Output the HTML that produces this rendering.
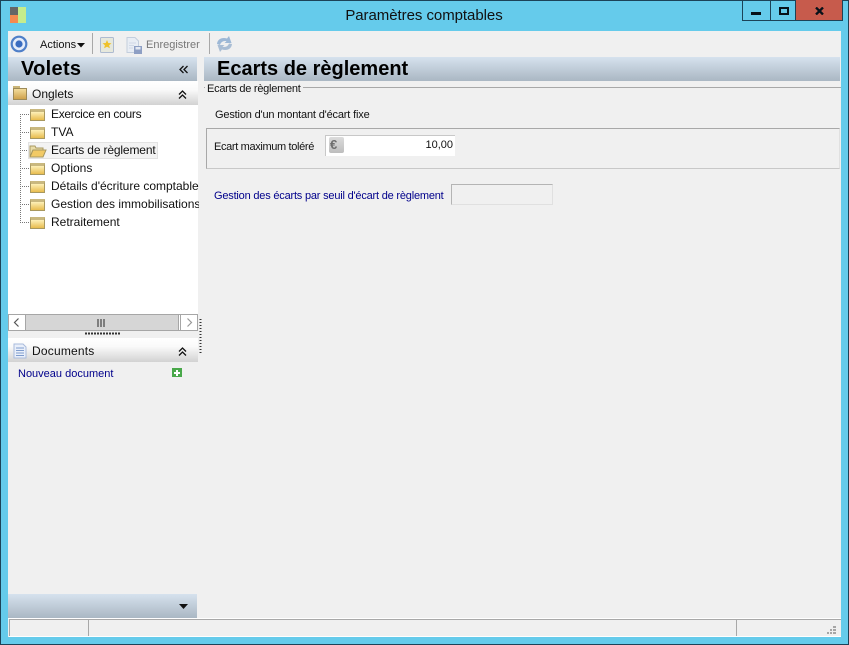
<!DOCTYPE html>
<html><head><meta charset="utf-8"><style>
html,body{margin:0;padding:0;background:#f0f0f0}
#w{position:relative;width:849px;height:645px;overflow:hidden;background:#65cbeb;font-family:"Liberation Sans",sans-serif;font-size:12px;color:#111}
#w div,#w svg{position:absolute}
.t{white-space:nowrap;line-height:14px}
.s{font-size:11px}
.grad{background:linear-gradient(#d6e2ee,#aab7c3)}
.hd{background:linear-gradient(#fff,#fafafa 35%,#d2d2d2)}
.f{left:30px;width:13px;height:8px;background:linear-gradient(#fdf0b8,#e8bc4e);border:1px solid #a89860;border-top:3px solid #c9b87f}
</style></head><body><div id="w">
<div style="left:0;top:0;width:847px;height:643px;border:1px solid #1c4358"></div>
<div style="left:8px;top:31px;width:833px;height:606px;background:#f0f0f0"></div>
<div style="left:10px;top:7px;width:8px;height:8px;background:#666"></div>
<div style="left:10px;top:15px;width:8px;height:8px;background:#f58a4f"></div>
<div style="left:18px;top:7px;width:8px;height:16px;background:#c5ec8c"></div>
<div class="t" style="left:0;top:8px;width:848px;text-align:center;font-size:15px;line-height:16px;color:#111;letter-spacing:-.05px">Paramètres comptables</div>
<div style="left:742px;top:0;width:27px;height:20px;border:1px solid #1c4358;border-top:0"></div>
<div style="left:770px;top:0;width:25px;height:20px;border-right:1px solid #1c4358;border-bottom:1px solid #1c4358"></div>
<div style="left:796px;top:0;width:46px;height:20px;background:#c75b4c;border:1px solid #1c4358;border-left:0;border-top:0"></div>
<div style="left:751px;top:12px;width:10px;height:3px;background:#08121a"></div>
<div style="left:779px;top:7px;width:6px;height:4px;border:2px solid #08121a"></div>
<svg style="left:815px;top:7px" width="9" height="8" viewBox="0 0 9 8"><path d="M1 0.500L8 7.500M8 0.500L1 7.500" stroke="#08121a" stroke-width="2.300" fill="none"/></svg>

<svg style="left:10px;top:35px" width="18" height="18" viewBox="0 0 18 18"><circle cx="9" cy="9" r="7.300" fill="#e4ecfa" stroke="#4f7fc8" stroke-width="2.200"/><circle cx="9" cy="9" r="3.600" fill="#3a6cc0"/></svg>
<div class="t s" style="left:40px;top:38px">Actions</div>
<svg style="left:77px;top:43px" width="8" height="5"><path d="M0 0H8L4 4.500Z" fill="#111"/></svg>
<div style="left:92px;top:33px;width:1px;height:21px;background:#a8a8a8"></div>
<svg style="left:100px;top:37px" width="14" height="16" viewBox="0 0 14 16"><rect x=".5" y=".5" width="13" height="15" rx="1" fill="#e6e8dc" stroke="#aebbd0"/><path d="M7 3l1.300 3 3.200.2-2.400 2 .8 3.100L7 9.700 4.100 11.300l.8-3.100-2.400-2 3.200-.2Z" fill="#efc22a"/></svg>
<svg style="left:126px;top:37px" width="17" height="17" viewBox="0 0 17 17"><path d="M1 .5H9L12.500 4V15.500H1Z" fill="#e8edf4" stroke="#c3cedd"/><path d="M3 6H10M3 8.500H8M3 11H7" stroke="#cfd8e6"/><rect x="8" y="9" width="8" height="8" fill="#8e9fc4"/><rect x="9.500" y="10" width="5" height="2.500" fill="#e3e8f2"/></svg>
<div class="t s" style="left:146px;top:38px;color:#777">Enregistrer</div>
<div style="left:209px;top:33px;width:1px;height:21px;background:#a8a8a8"></div>
<svg style="left:216px;top:35px" width="17" height="18" viewBox="0 0 17 18"><path d="M1 9C1.500 4 6 2 11 3.500L13 1 15.500 8H8.500L10.500 6.200C7.500 5.500 5 6.800 4 10Z" fill="#9db8d6"/><path d="M16 9C15.500 14 11 16 6 14.500L4 17 1.500 10H8.500L6.500 11.800C9.500 12.500 12 11.200 13 8.500Z" fill="#a9bdd4"/></svg>

<div class="grad" style="left:8px;top:57px;width:189px;height:24px"></div>
<div class="t" style="left:21px;top:59px;font-size:20px;line-height:21px;font-weight:bold;color:#000;letter-spacing:.3px">Volets</div>
<svg style="left:179px;top:65px" width="10" height="9" viewBox="0 0 10 9"><path d="M4.500 1L1 4.500 4.500 8M8.500 1L5 4.500 8.500 8" fill="none" stroke="#111" stroke-width="1.300"/></svg>

<div style="left:8px;top:81px;width:190px;height:24px" class="hd"></div>
<div style="left:13px;top:88px;width:12px;height:10px;background:linear-gradient(#f2dc9c,#cfa24c);border:1px solid #9d8a58"></div>
<div style="left:13px;top:86px;width:7px;height:2px;background:#c9b477"></div>
<div class="t" style="left:32px;top:87px">Onglets</div>
<svg style="left:178px;top:90px" width="9" height="9" viewBox="0 0 9 9"><path d="M1 4.500L4.500 1 8 4.500M1 8.500L4.500 5 8 8.500" fill="none" stroke="#111" stroke-width="1.300"/></svg>

<div style="left:8px;top:105px;width:190px;height:210px;background:#fff"></div>
<svg style="left:20px;top:105px" width="12" height="120"><path d="M.5 9V117M0 9.500H11M0 27.500H11M0 45.500H11M0 63.500H11M0 81.500H11M0 99.500H11M0 117.500H11" stroke="#777" stroke-dasharray="1 1" fill="none"/></svg>

<div class="f" style="top:109px"></div>
<div class="f" style="top:127px"></div>
<div class="f" style="top:163px"></div>
<div class="f" style="top:181px"></div>
<div class="f" style="top:199px"></div>
<div class="f" style="top:217px"></div>
<div style="left:28px;top:142px;width:128px;height:15px;background:#f3f3f3;border:1px solid #e2e2e2"></div>
<svg style="left:29px;top:145px" width="18" height="13" viewBox="0 0 18 13"><path d="M1 1H6L7 3H14V5H4L1 12Z" fill="#e9dca8" stroke="#a89860"/><path d="M1 12L4 5H17L14 12Z" fill="#f2ca66" stroke="#a89860"/></svg>

<div class="t" style="left:51px;top:107px;letter-spacing:-.3px">Exercice en cours</div>
<div class="t" style="left:51px;top:125px">TVA</div>
<div class="t" style="left:51px;top:143px;letter-spacing:-.15px">Ecarts de règlement</div>
<div class="t" style="left:51px;top:161px">Options</div>
<div class="t" style="left:51px;top:179px;width:148px;overflow:hidden">Détails d'écriture comptable</div>
<div class="t" style="left:51px;top:197px;width:148px;overflow:hidden">Gestion des immobilisations</div>
<div class="t" style="left:51px;top:215px">Retraitement</div>

<div style="left:8px;top:314px;width:189px;height:15px;background:#fff;border-top:1px solid #a6a6a6;border-bottom:1px solid #a6a6a6"></div>
<div style="left:8px;top:314px;width:16px;height:15px;background:#fff;border:1px solid #a6a6a6"></div>
<div style="left:25px;top:314px;width:152px;height:15px;background:#d6d6d6;border:1px solid #a6a6a6"></div>
<div style="left:180px;top:314px;width:16px;height:15px;background:#fff;border:1px solid #a6a6a6"></div>
<svg style="left:13px;top:318px" width="7" height="9"><path d="M5.500 .5L1.500 4.500 5.500 8.500" fill="none" stroke="#555" stroke-width="1.200"/></svg>
<svg style="left:186px;top:318px" width="7" height="9"><path d="M1.500 .5L5.500 4.500 1.500 8.500" fill="none" stroke="#999" stroke-width="1.200"/></svg>
<svg style="left:97px;top:319px" width="9" height="8"><path d="M1 0V8M4 0V8M7 0V8" stroke="#606060" stroke-width="1.500"/></svg>
<svg style="left:85px;top:332px" width="36" height="3"><path d="M0 1.500H36" stroke="#333" stroke-width="2" stroke-dasharray="2 1"/></svg>
<svg style="left:199px;top:319px" width="3" height="36"><path d="M1.500 0V36" stroke="#333" stroke-width="2" stroke-dasharray="1 2"/></svg>

<div class="hd" style="left:8px;top:338px;width:190px;height:24px"></div>
<svg style="left:13px;top:343px" width="14" height="16" viewBox="0 0 14 16"><path d="M1 1H10L13 4V15H1Z" fill="#e9effa" stroke="#a9bbdc"/><path d="M3 5H11M3 7.500H11M3 10H11M3 12.500H11" stroke="#7e9ccd"/></svg>
<div class="t" style="left:32px;top:344px;letter-spacing:.2px">Documents</div>
<svg style="left:178px;top:347px" width="9" height="9" viewBox="0 0 9 9"><path d="M1 4.500L4.500 1 8 4.500M1 8.500L4.500 5 8 8.500" fill="none" stroke="#111" stroke-width="1.300"/></svg>
<div class="t s" style="left:18px;top:367px;color:#00008b">Nouveau document</div>
<div style="left:172px;top:368px;width:10px;height:9px;background:#49a84a"></div>
<div style="left:174px;top:372px;width:6px;height:2px;background:#fff"></div>
<div style="left:176px;top:370px;width:2px;height:6px;background:#fff"></div>

<div class="grad" style="left:8px;top:594px;width:189px;height:24px"></div>
<svg style="left:179px;top:604px" width="9" height="6"><path d="M0 0H9L4.500 5Z" fill="#111"/></svg>

<div style="left:204px;top:57px;width:636px;height:24px" class="grad"></div>
<div class="t" style="left:217px;top:59px;font-size:20px;line-height:21px;font-weight:bold;color:#000">Ecarts de règlement</div>

<div style="left:204px;top:87px;width:637px;height:1px;background:#a8a8a8"></div>
<div class="t s" style="left:205px;top:82px;padding:0 2px;background:#f0f0f0;letter-spacing:-.26px">Ecarts de règlement</div>
<div class="t s" style="left:215px;top:108px;letter-spacing:-.17px">Gestion d'un montant d'écart fixe</div>
<div style="left:206px;top:128px;width:632px;height:39px;border:1px solid #a8a8a8;border-right-color:#e0e0e0;border-bottom-color:#c8c8c8"></div>
<div class="t s" style="left:214px;top:140px;letter-spacing:-.35px">Ecart maximum toléré</div>
<div style="left:325px;top:135px;width:130px;height:21px;background:#fff;border-top:1px solid #c8c8c8;box-sizing:border-box"></div>
<div style="left:325px;top:135px;width:1px;height:21px;background:#c8c8c8"></div>
<div style="left:329px;top:137px;width:15px;height:16px;background:linear-gradient(#dcdcdc,#bdbdbd);border-radius:2px"></div>
<div class="t" style="left:330px;top:138px;font-size:13px;font-weight:bold;color:#6e6e6e">€</div>
<div class="t s" style="left:353px;top:138px;width:100px;text-align:right">10,00</div>
<div class="t s" style="left:214px;top:189px;color:#00008b;letter-spacing:-.2px">Gestion des écarts par seuil d'écart de règlement</div>
<div style="left:451px;top:184px;width:100px;height:19px;border:1px solid #b4b4b4;border-right-color:#e0e0e0;border-bottom-color:#e0e0e0"></div>

<div style="left:8px;top:618px;width:833px;height:19px;background:#f0f0f0;border-top:1px solid #fff;box-sizing:border-box"></div>
<div style="left:9px;top:619px;width:832px;height:1px;background:#a8a8a8"></div>
<div style="left:9px;top:619px;width:1px;height:17px;background:#a8a8a8"></div>
<div style="left:88px;top:619px;width:1px;height:17px;background:#a8a8a8"></div>
<div style="left:736px;top:619px;width:1px;height:17px;background:#a8a8a8"></div>
<div style="left:9px;top:636px;width:832px;height:1px;background:#fff"></div>
<svg style="left:826px;top:625px" width="11" height="10"><path d="M7 1H10V3H7ZM4 4H6V6H4ZM7 4H10V6H7ZM1 7H3V9H1ZM4 7H6V9H4ZM7 7H10V9H7Z" fill="#a6a6a6"/></svg>
</div></body></html>
